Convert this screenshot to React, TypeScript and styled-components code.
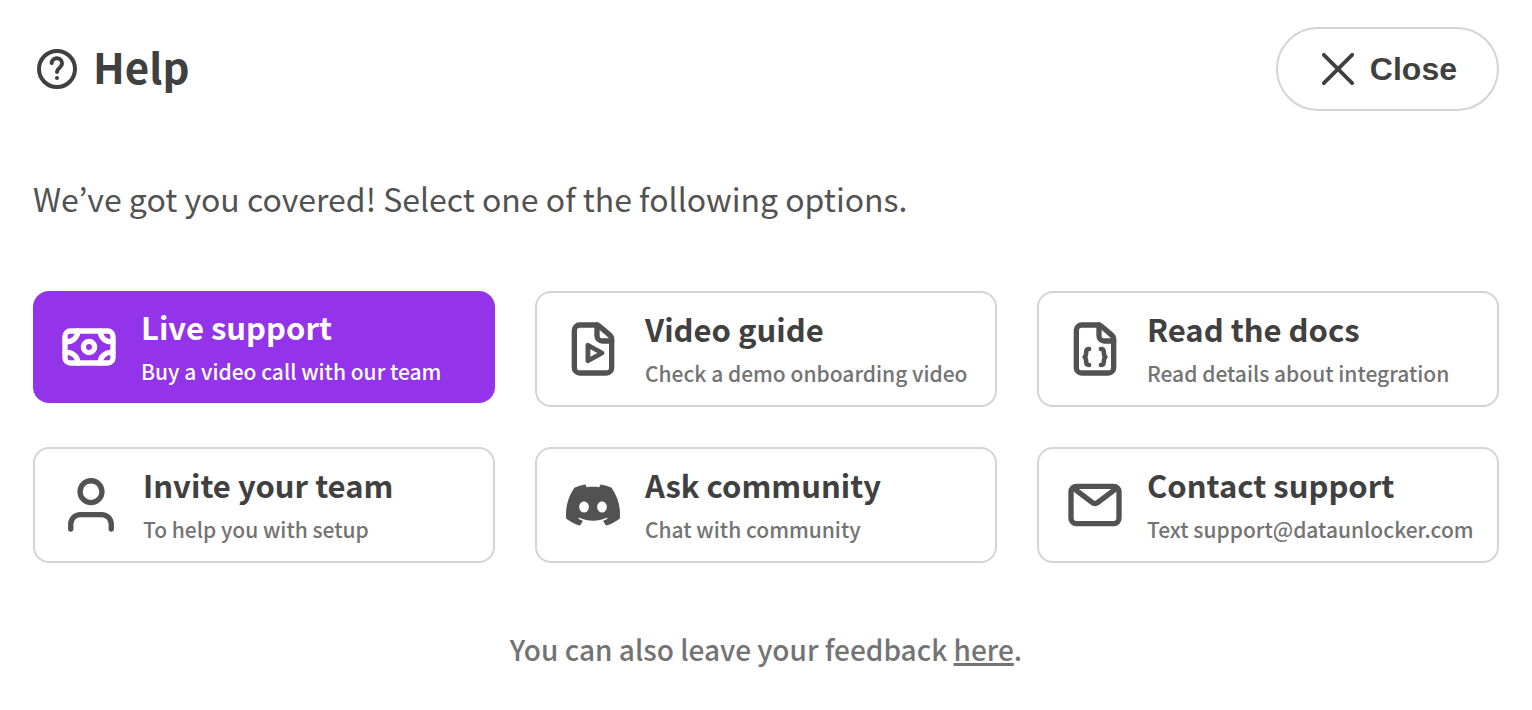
import React from "react";
import styled, { createGlobalStyle, css } from "styled-components";
import { SiDiscord } from "react-icons/si";

const sans = `"Noto Sans CJK KR", "Noto Sans", sans-serif`;

const GlobalStyle = createGlobalStyle`
  *, *::before, *::after { box-sizing: border-box; }
  body { margin: 0; background: #ffffff; color: #404040; font-family: ${sans}; }
`;

const Page = styled.main`
  padding: 27px 33px 40px;
`;

const Header = styled.header`
  display: flex;
  align-items: center;
  justify-content: space-between;
`;

const Title = styled.h1`
  display: flex;
  align-items: flex-start;
  gap: 12px;
  margin: 0;
  font-size: 42px;
  line-height: 42px;
  font-weight: 700;
`;

const CloseButton = styled.button`
  display: flex;
  align-items: center;
  gap: 12px;
  height: 84px;
  padding: 0 40px;
  border: 2px solid #d4d4d4;
  border-radius: 42px;
  background: #ffffff;
  color: #404040;
  font: 700 32px/40px "Liberation Sans", Arial, sans-serif;
  cursor: pointer;
`;

const Intro = styled.p`
  margin: 59px 0 65px;
  font-size: 32px;
  line-height: 56px;
  color: #525252;
`;

const Options = styled.div`
  display: grid;
  grid-template-columns: repeat(3, minmax(0, 1fr));
  align-items: start;
  gap: 40px;
`;

const OptionCard = styled.button<{ $primary?: boolean }>`
  display: flex;
  align-items: center;
  gap: 20px;
  padding: 12px 24px;
  border: 2px solid #d4d4d4;
  border-radius: 16px;
  background: #ffffff;
  color: #525252;
  font-family: ${sans};
  text-align: left;
  white-space: nowrap;
  cursor: pointer;
  ${(p) =>
    p.$primary &&
    css`
      border: 0;
      background: #9333ea;
      color: #ffffff;
    `}
`;

const OptionIcon = styled.span`
  display: flex;
  flex: none;
  align-items: center;
  justify-content: center;
  width: 64px;
  height: 64px;
`;

const OptionText = styled.span`
  display: flex;
  flex-direction: column;
`;

const OptionName = styled.span<{ $primary?: boolean }>`
  font-size: 31px;
  line-height: 48px;
  font-weight: 700;
  color: ${(p) => (p.$primary ? "#ffffff" : "#404040")};
`;

const OptionNote = styled.span<{ $primary?: boolean }>`
  font-size: 21px;
  line-height: 40px;
  font-weight: 500;
  color: ${(p) => (p.$primary ? "#ffffff" : "#737373")};
`;

const Feedback = styled.p`
  margin: 62px 0 0;
  font-size: 28px;
  line-height: 48px;
  font-weight: 500;
  text-align: center;
  color: #737373;
`;

const FeedbackLink = styled.a`
  color: inherit;
  text-decoration: underline;
  text-decoration-thickness: 3px;
  text-underline-offset: 2px;
`;

type IconProps = { size?: number; weight?: number; children: React.ReactNode };

const LineIcon = ({ size = 64, weight = 2, children }: IconProps) => (
  <svg
    width={size}
    height={size}
    viewBox="0 0 24 24"
    fill="none"
    stroke="currentColor"
    strokeWidth={weight}
    strokeLinecap="round"
    strokeLinejoin="round"
    aria-hidden="true"
  >
    {children}
  </svg>
);

const FileOutline = () => (
  <>
    <path d="M13.6 3H7a2 2 0 0 0-2 2v14a2 2 0 0 0 2 2h10a2 2 0 0 0 2-2V8.3a2 2 0 0 0-.7-1.5l-4-3.4A2 2 0 0 0 13.6 3Z" />
    <path d="M13.5 3v4a2 2 0 0 0 2 2H19" />
  </>
);

const options = [
  {
    name: "Live support",
    note: "Buy a video call with our team",
    primary: true,
    icon: (
      <LineIcon>
        <rect x="3" y="6" width="18" height="12" rx="2" />
        <circle cx="12" cy="12" r="2.1" />
        <path d="M7.8 6a4 4 0 0 1-4 4H3M16.2 6a4 4 0 0 0 4 4h.8M7.8 18a4 4 0 0 0-4-4H3M16.2 18a4 4 0 0 1 4-4h.8" />
      </LineIcon>
    ),
  },
  {
    name: "Video guide",
    note: "Check a demo onboarding video",
    icon: (
      <LineIcon>
        <FileOutline />
        <path strokeWidth="1.8" d="M10.1 10.6v5.8l5.3-2.9Z" />
      </LineIcon>
    ),
  },
  {
    name: "Read the docs",
    note: "Read details about integration",
    icon: (
      <LineIcon>
        <FileOutline />
        <path
          strokeWidth="1.7"
          d="M9.8 12c-1 0-1.1.5-1.1 1.1 0 1-.1 1.5-.6 1.9.5.4.6.9.6 1.9 0 .6.1 1.1 1.1 1.1M14.2 12c1 0 1.1.5 1.1 1.1 0 1 .1 1.5.6 1.9-.5.4-.6.9-.6 1.9 0 .6-.1 1.1-1.1 1.1"
        />
      </LineIcon>
    ),
  },
  {
    name: "Invite your team",
    note: "To help you with setup",
    icon: (
      <LineIcon>
        <circle cx="12" cy="7" r="4.1" />
        <path d="M4.4 21v-1.8a3.6 3.6 0 0 1 3.6-3.6h8a3.6 3.6 0 0 1 3.6 3.6V21" />
      </LineIcon>
    ),
  },
  {
    name: "Ask community",
    note: "Chat with community",
    icon: <SiDiscord size={54} aria-hidden="true" />,
  },
  {
    name: "Contact support",
    note: "Text support@dataunlocker.com",
    icon: (
      <LineIcon>
        <rect x="3" y="5" width="18" height="14" rx="2" />
        <path d="m4 5.8 6.9 5.2a1.8 1.8 0 0 0 2.2 0L20 5.8" />
      </LineIcon>
    ),
  },
];

export default function App() {
  return (
    <>
      <GlobalStyle />
      <Page>
        <Header>
          <Title>
            <LineIcon size={48} weight={2}>
              <circle cx="12" cy="12" r="9" />
              <path d="M9.3 9a2.6 2.6 0 0 1 5.2.4c0 1.9-2.5 2-2.5 4.1" />
              <path d="M12 16.5h.01" />
            </LineIcon>
            Help
          </Title>
          <CloseButton type="button">
            <LineIcon size={40} weight={2.3}>
              <path d="M3.5 3.5l17 17M20.5 3.5l-17 17" />
            </LineIcon>
            Close
          </CloseButton>
        </Header>
        <Intro>We’ve got you covered! Select one of the following options.</Intro>
        <Options>
          {options.map((o) => (
            <OptionCard key={o.name} type="button" $primary={o.primary}>
              <OptionIcon>{o.icon}</OptionIcon>
              <OptionText>
                <OptionName $primary={o.primary}>{o.name}</OptionName>
                <OptionNote $primary={o.primary}>{o.note}</OptionNote>
              </OptionText>
            </OptionCard>
          ))}
        </Options>
        <Feedback>
          You can also leave your feedback <FeedbackLink href="#feedback">here</FeedbackLink>.
        </Feedback>
      </Page>
    </>
  );
}
